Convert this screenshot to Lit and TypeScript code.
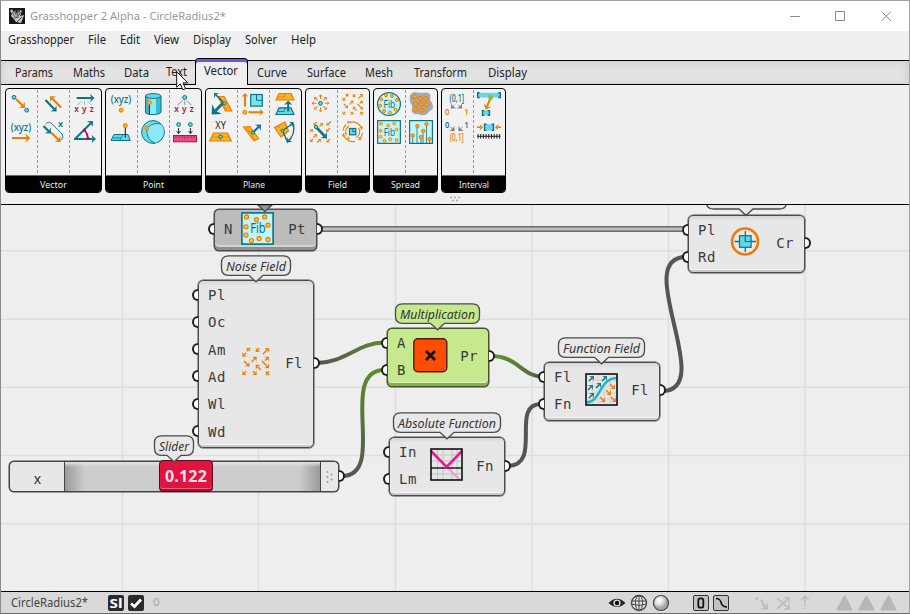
import { LitElement, html, svg, css } from "lit";
import { customElement } from "lit/decorators.js";

const T = "#0b7486", O = "#ea7d00", C = "#66d7e8", Y = "#ffb31f", M = "#b3124f";

/* Text run set to an exact width so it can sit in a flex row. */
const label = (s: string, w: number, size = 12, cls = "") =>
  html`<svg class="label ${cls}" width=${w} height="16"><text x="0" y="12" font-size=${size} textLength=${w} lengthAdjust="spacingAndGlyphs">${s}</text></svg>`;

const stext = (s: string, x: number, y: number, w: number, size: number, fill: string, weight = 400) =>
  svg`<text x=${x} y=${y} font-size=${size} fill=${fill} font-weight=${weight} textLength=${w} lengthAdjust="spacingAndGlyphs">${s}</text>`;

/* Arrow with a right-angled, notched head. */
const arrow = (x1: number, y1: number, x2: number, y2: number, c: string, w = 2, size = 5) => {
  const h = size * 0.76, d = Math.hypot(x2 - x1, y2 - y1), ux = (x2 - x1) / d, uy = (y2 - y1) / d;
  const bx = x2 - ux * h, by = y2 - uy * h, s = h * 0.92;
  const ix = x2 - ux * h * 0.7, iy = y2 - uy * h * 0.7;
  return svg`<path d="M${x1} ${y1}L${ix} ${iy}" stroke=${c} stroke-width=${w} fill="none"/>
    <path d="M${x2} ${y2}L${bx - uy * s} ${by + ux * s}L${ix} ${iy}L${bx + uy * s} ${by - ux * s}Z" fill=${c}/>`;
};
const arrows = (list: number[][], c: string, w = 1.4, h = 4) => list.map((a) => arrow(a[0], a[1], a[2], a[3], c, w, h));
const dot = (x: number, y: number, r = 2, fill = Y, stroke = O) =>
  svg`<circle cx=${x} cy=${y} r=${r} fill=${fill} stroke=${stroke} stroke-width="1"/>`;
const line = (d: string, c: string, w = 1, fill = "none") => svg`<path d=${d} stroke=${c} stroke-width=${w} fill=${fill}/>`;

const noise = () => arrows([
  [8, 4, 4.7, 0.7], [4, 6, 0.3, 9.7], [17.3, 1.3, 13.7, 5], [21, 7, 27, 1], [9.7, 14.7, 14.7, 9.7], [2, 14, 7.5, 19.5],
  [23, 13.5, 27, 9.7], [20, 14, 27, 21.3], [18.7, 22.7, 13.7, 17.7], [4, 24.3, 0.3, 28], [11, 24.3, 14.7, 28], [27.3, 28, 23.7, 24.4],
], O, 1.4, 4.6);

const fibDots = [[5, 4.5], [14, 7], [21.5, 4.5], [4.5, 13.5], [24.5, 12], [4.5, 21], [9.5, 26], [16.5, 24], [24.5, 25]];
const fibSquare = () => svg`<rect x="0.8" y="0.8" width="28.4" height="28.4" fill="#c2f5fb" stroke=${T} stroke-width="1.5"/>
  ${fibDots.map(([x, y]) => dot(x, y, 1.9, "#ffc93c"))}${stext("Fib", 8.3, 19.5, 14.2, 12.5, T)}`;

const xyz = () => svg`${line("M8 9.5L4.5 13M11.5 9.5V13M15 9.5L18.5 13", "#aaa", 1)}
  ${stext("x", 1.3, 20.3, 4.6, 9.5, M, 600)}${stext("y", 9, 20.3, 4.6, 9.5, M, 600)}${stext("z", 16.8, 20.3, 4, 9.5, M, 600)}`;

const brackets = (x: number, y: number, w: number, h: number) =>
  svg`<rect x=${x} y=${y} width=${w} height=${h} fill=${C}/>${line(`M${x + 2} ${y}H${x}V${y + h}H${x + 2}M${x + w - 2} ${y}H${x + w}V${y + h}H${x + w - 2}`, T, 1.4)}`;

const icons: Record<string, () => unknown> = {
  v1: () => svg`${arrow(7, 7, 16, 16, O, 2, 6)}${dot(5, 5.3, 1.9, C, T)}${dot(17.7, 18.2, 1.9, C, T)}`,
  v2: () => svg`${arrow(20, 15.5, 9, 4.2, O, 2.2, 6)}${arrow(4.5, 8, 15.6, 19.6, T, 2.2, 6)}`,
  v3: () => svg`${arrow(3.6, 6, 21.5, 6, T, 2.2, 6)}${xyz()}`,
  v4: () => svg`${stext("(xyz)", 1.7, 11, 20.6, 10, T, 500)}${arrow(3, 18, 21.3, 18, O, 2, 6.5)}`,
  v5: () => svg`${arrow(2.5, 6, 10, 13.5, T, 2.2, 6)}${arrow(10, 12.5, 19.7, 22, O, 2.2, 6)}
    ${line("M4.5 4.2Q7.5 0.5 11 3.8L21 14Q23 17 20.5 20.2", T, 0.9)}${stext("x", 17, 6.8, 5, 9, T, 600)}`,
  v6: () => svg`${line("M11.5 10Q14.5 13.5 15 18.4", M, 1.8)}${arrow(2, 19, 20, 1, T, 2, 6)}${arrow(1, 19, 23, 19, T, 2, 6)}${dot(11.5, 10, 1.2, M, M)}${dot(15, 18.5, 1.2, M, M)}`,
  p1: () => svg`${stext("(xyz)", 1.7, 11.3, 20.6, 10, T, 500)}${dot(12.2, 18.2, 2)}`,
  p2: () => svg`<path d="M4.5 4V20Q4.5 22.5 12 22.5T20 20V4Z" fill="#36bcd0" stroke=${T} stroke-width="1"/><path d="M7.5 5H15V22H7.5Z" fill="#8beaf5"/>
    <ellipse cx="12.2" cy="4" rx="7.7" ry="2.4" fill=${C} stroke=${T}/>${line("M8.3 12V22.5", "#111", 1)}${dot(8.3, 10.4, 2)}`,
  p3: () => svg`${line("M10 8.5L5 13M11.7 8.5V13M13 8.5L18 13", "#aaa")}${xyz()}${dot(11.7, 5.5, 2, C, T)}`,
  p4: () => svg`${line("M5 14.5H19L21.3 20.5H2Z", T, 1, C)}${line("M4 18H12L14 15M12 18L11 20", T, 0.8)}${line("M16.3 7V17.5", "#111", 1)}${dot(16.3, 5.6, 2)}`,
  p5: () => svg`<circle cx="12" cy="12" r="11.4" fill="#70ddea" stroke=${T}/><path d="M6 8Q12 2 20 4Q23.4 8 22.5 14Q20 21 14 23Q5 18 6 8Z" fill="#8beaf5"/>
    ${line("M6 8Q4.5 20 14 23M6 8Q12 2 20 4", T, 0.9)}${dot(6, 8, 2)}`,
  p6: () => svg`${dot(5.6, 4.5, 1.9, C, T)}${dot(17.4, 4.5, 1.9, C, T)}${arrows([[5.6, 8, 5.6, 14], [17.4, 8, 17.4, 14]], "#222", 1, 3.8)}
    <rect x="0.5" y="15.5" width="23" height="6.3" fill="#ea4b86" stroke=${M}/>${line("M3 15V18M6 15V18M9 15V18M12 15V19M15 15V18M18 15V18M21 15V18", M, 0.8)}`,
  l1: () => svg`${line("M9 4.5H15L22.7 19H16.5Z", O, 1.2, Y)}${line("M12 7L18 18M12 11H17", O, 0.8)}${arrow(14, 11, 2.7, 22.5, T, 3, 10)}${arrow(15, 11, 5, 1, T, 1.5, 5)}${dot(15.5, 11.5, 1.5, C, T)}`,
  l2: () => svg`${arrow(4, 14.5, 4, 1, O, 2, 5)}${arrow(7.5, 20.2, 22.6, 20.2, O, 2, 5)}${dot(3.8, 20.3, 2)}
    <rect x="9.7" y="2.5" width="11.6" height="11.6" fill="#7be1ed" stroke=${T} stroke-width="1.2"/>${line("M15.5 2.5V8.3H21.3", T)}`,
  l3: () => svg`${line("M6 1.5H18L21 8H3Z", O, 1.2, Y)}${line("M5 5H11L12 2", O, 0.8)}${line("M6 15.8H18L21 22.5H3Z", T, 1.2, C)}${line("M5 19.5H11L12 16", T, 0.8)}${arrow(15.2, 19.5, 15.2, 8.5, T, 2, 6)}`,
  l4: () => svg`${stext("XY", 6.3, 9, 10.5, 10, "#222")}${line("M4.5 13H18.5L22.3 21H0.7Z", O, 1.2, Y)}${line("M11.5 13V21M3 17H20", O, 0.8)}${dot(11.4, 16.8, 1.7, C, T)}`,
  l5: () => svg`${line("M2.5 7L9 6.5L17.5 18.5L13 20.8Z", O, 1.2, Y)}${line("M5 7L14 19.5M7 12L12 11", O, 0.8)}${arrow(12, 12.5, 20, 4.5, T, 2, 6)}${dot(12, 12.6, 1.5, C, T)}`,
  l6: () => svg`${line("M1.5 7.5L12 2L15.5 11L8 17Z", O, 1.2, Y)}${line("M5 5.5L9 11L14 8", O, 0.8)}${line("M9.5 10.5L20 3.5M9.5 10.5L14.5 22Q22.5 15 20.5 4", T, 1.4)}${arrow(17, 5, 20.8, 2.2, T, 1.4, 5)}${arrow(17.5, 18.5, 14.2, 22.4, T, 1.4, 5)}${dot(9.5, 10.8, 1.4, C, T)}`,
  f1: () => svg`${[0, 45, 90, 135, 180, 225, 270, 315].map((a) => {
    const r = (a * Math.PI) / 180, x = Math.cos(r), y = Math.sin(r);
    return arrow(11.5 + 4.2 * x, 11.3 + 4.2 * y, 11.5 + 9 * x, 11.3 + 9 * y, O, 1.1, 3.2);
  })}${dot(11.5, 11.3, 1.9, C, T)}`,
  f2: () => svg`<g transform="translate(1.3 1.3) scale(.76)">${noise()}</g>`,
  f3: () => svg`${arrows([[8, 2, 4.5, 5.5], [14, 3, 10.5, 6.5], [22, 1.5, 17.5, 5.5], [4, 9, 1, 12], [21, 8, 17, 12], [8, 14, 4.5, 17.5], [4, 19, 1, 22], [12, 19, 8, 22.5], [21, 19, 17.5, 22.5]].map(([a, b, c, d]) => [c, d, a, b]).map(([a, b, c, d], i) => (i % 2 ? [a, b, c, d] : [c, d, a, b])), O, 1.1, 3.6)}${arrow(7, 7, 18, 18.5, T, 2.6, 6.5)}${dot(7, 7, 1.7, C, T)}`,
  f4: () => svg`${line("M5.5 15A6.5 6.5 0 0 1 8 6M17.5 8A6.5 6.5 0 0 1 15 17.5M8 2.5A10 10 0 0 1 20 7M3 16A10 10 0 0 0 14 21.5M2 11A10 10 0 0 1 5 4.5M21.5 13A10 10 0 0 1 18 19.5", O, 1.1)}
    ${arrows([[6, 3, 9, 1.5], [17, 20, 20, 17.5], [3, 13, 2, 17], [20, 10, 21, 6], [6, 18, 9, 18.5]], O, 1, 3.2)}
    <rect x="8.5" y="8.5" width="6.3" height="6.3" fill=${C} stroke=${T} stroke-width="1.2"/>${line("M11.7 8.5V11.5H14.8", T, 0.9)}`,
  s1: () => svg`<circle cx="12" cy="12" r="11.4" fill="#c2f5fb" stroke=${T} stroke-width="1.2"/>
    ${[[9, 3.2], [15, 4], [20, 8], [4.2, 7.3], [3.2, 13.8], [7, 19], [13, 20.7], [18.5, 17.6]].map(([x, y]) => dot(x, y, 1.5, "#ffc93c"))}${stext("Fib", 6.5, 15.6, 11.8, 10, T)}`,
  s2: () => svg`<path d="M1 3Q4 -1 8 .5Q14 1 16 .5Q21 0 21.5 4L21 8Q25 12 23.5 17Q20 19 18 22Q13 24.5 9 22Q3 23 2.5 18Q4 14 1.5 11Q0 7 1 3Z" fill="#a8a8a8"/>
    ${[[5.5, 4.8], [11, 6.5], [16.8, 6.8], [6.5, 12], [12, 12.2], [17.6, 12.5], [7, 17.3], [13, 18.2]].map(([x, y]) => dot(x, y, 2, "#ffa421"))}`,
  s3: () => svg`<g transform="scale(.8)">${fibSquare()}</g>`,
  s4: () => svg`<rect x="0.6" y="0.6" width="22.8" height="22.8" fill="#c2f5fb" stroke=${T} stroke-width="1.2"/>
    ${line("M3.6 16V23M8 7V23M12 19V23M14 11V23M17.5 5V23M20.5 19V23", T, 0.8)}${[[3.8, 15.5], [8.4, 6], [12, 17], [14.3, 11], [17.5, 4], [20.5, 19]].map(([x, y]) => dot(x, y, 1.7, "#ffa421"))}`,
  i1: () => svg`${stext("(0,1]", 4.5, 9.5, 14.5, 10.5, T, 500)}${arrows([[9.5, 13, 6, 16.5], [13.5, 13, 17, 16.5]], "#777", 1, 5)}${stext("0", 0, 22.6, 4.4, 9.5, O, 600)}${stext("1", 19.6, 22.6, 4, 9.5, O, 600)}`,
  i2: () => svg`${brackets(0.7, 0.8, 22.6, 4.7)}${arrow(14.5, 4, 8.7, 17.4, O, 2, 6)}<circle cx="13.5" cy="5.5" r="2.8" fill="#8dbf45" opacity=".7"/>${brackets(5.5, 18.6, 7, 4.6)}`,
  i3: () => svg`${stext("0", 0, 7.6, 4.4, 9.5, T, 600)}${stext("1", 19.6, 7.6, 4, 9.5, T, 600)}${arrows([[5.5, 7, 9.5, 11], [17.5, 7, 13.5, 11]], "#777", 1, 5)}${stext("(0,1]", 4.7, 21.4, 14.2, 10.5, O, 500)}`,
  i4: () => svg`${arrow(0, 7.3, 6, 7.3, O, 1.4, 4.6)}${arrow(24, 7.3, 18, 7.3, O, 1.4, 4.6)}${brackets(7.5, 4.2, 9, 6.2)}
    ${line("M0.5 16.3H23.5M1 14V18.6M3.7 14V18.6M6.4 14V18.6M9.1 14V18.6M11.8 14V18.6M14.5 14V18.6M17.2 14V18.6M19.9 14V18.6M22.6 14V18.6", "#222", 1)}`,
};

const groups: { name: string; w: number; cols: string[][] }[] = [
  { name: "Vector", w: 27, cols: [["v1", "v4"], ["v2", "v5"], ["v3", "v6"]] },
  { name: "Point", w: 21, cols: [["p1", "p4"], ["p2", "p5"], ["p3", "p6"]] },
  { name: "Plane", w: 22, cols: [["l1", "l4"], ["l2", "l5"], ["l3", "l6"]] },
  { name: "Field", w: 19, cols: [["f1", "f3"], ["f2", "f4"]] },
  { name: "Spread", w: 29, cols: [["s1", "s3"], ["s2", "s4"]] },
  { name: "Interval", w: 30, cols: [["i1", "i3"], ["i2", "i4"]] },
];

const menu: [string, number][] = [["Grasshopper", 66], ["File", 18], ["Edit", 20], ["View", 25], ["Display", 38], ["Solver", 32], ["Help", 25]];
const tabs: [string, number, number][] = [
  ["Params", 38, 20], ["Maths", 32, 19], ["Data", 25, 17], ["Text", 21, 8], ["Vector", 34, 9], ["Curve", 30, 19.5], ["Surface", 39, 19.5], ["Mesh", 28, 21], ["Transform", 53, 21], ["Display", 39, 0],
];

interface NodeSpec { x: number; y: number; w: number; h: number; ins: string[]; top: number; out: string; outY: number; tone?: string; ix: number; iy: number; iw: number; art: () => unknown }
const nodes: NodeSpec[] = [
  { x: 214, y: 209, w: 103, h: 42, ins: ["N"], top: 6, out: "Pt", outY: 20, tone: "grey", ix: 27, iy: 3, iw: 33, art: () => svg`<g transform="scale(1.1)">${fibSquare()}</g>` },
  { x: 198, y: 280, w: 116, h: 168, ins: ["Pl", "Oc", "Am", "Ad", "Wl", "Wd"], top: 1, out: "Fl", outY: 83, ix: 44, iy: 67, iw: 29, art: noise },
  { x: 387, y: 328, w: 102, h: 59, ins: ["A", "B"], top: 1, out: "Pr", outY: 28, tone: "green", ix: 26, iy: 10, iw: 35,
    art: () => svg`<rect x="0.8" y="0.8" width="33" height="33" rx="4" fill="#ff4d00" stroke="#4a2000" stroke-width="1.4"/>${line("M13 13L22 22M22 13L13 22", "#111", 2.8)}` },
  { x: 389, y: 437, w: 116, h: 59, ins: ["In", "Lm"], top: 1, out: "Fn", outY: 29, ix: 41, iy: 11, iw: 34,
    art: () => svg`<rect x="1" y="1" width="31" height="31" fill="#e6e6e6"/>${line("M7.5 1V32M13 1V32M22 1V32M27 1V32M1 7H32M1 13H32M1 26H32", "#bbb", 0.8)}${line("M17 19L29 31", "#f5a0c5", 2.4)}${line("M1 20H32", "#111", 1.4)}${line("M1 3L16.6 19L32 3", "#ee1c86", 2.6)}<rect x="1" y="1" width="31" height="31" fill="none" stroke="#111" stroke-width="1.6"/>` },
  { x: 544, y: 362, w: 116, h: 59, ins: ["Fl", "Fn"], top: 1, out: "Fl", outY: 28, ix: 41, iy: 11, iw: 34,
    art: () => svg`<rect x="1" y="1" width="31" height="31" fill="#e6e6e6"/>${line("M7.5 1V32M13 1V32M19 1V32M25 1V32M1 7H32M1 13H32M1 20H32M1 26H32", "#ccc", 0.8)}
      ${arrows([[4, 8, 9, 3], [17, 8, 22, 3], [3, 17, 8, 12], [11, 15, 16, 10], [4, 25, 9, 20]], T, 1.4, 4.8)}${arrows([[25, 11, 30, 16], [21, 17, 26, 22], [15, 24, 20, 29], [26, 24, 31, 29]], O, 1.4, 4.8)}
      ${line("M1 29.5C16 30 14 5 32 5", "#23b4cc", 2.5)}<rect x="1" y="1" width="31" height="31" fill="none" stroke="#111" stroke-width="1.6"/>` },
  { x: 688, y: 215, w: 117, h: 58, ins: ["Pl", "Rd"], top: 0.5, out: "Cr", outY: 28, ix: 42, iy: 12, iw: 30,
    art: () => svg`<circle cx="15" cy="14.5" r="13" fill="#e9e9e9" stroke=${O} stroke-width="2.6"/>${line("M4.5 14.5H26M15.3 4V25", T, 1.3)}<rect x="9.5" y="8.7" width="11.6" height="11.6" fill="#5ed7e8" stroke=${T} stroke-width="1.2"/>${line("M15.3 9V14.5H21", T, 1.2)}` },
];

/* Callouts: left, right, top, tip x, caption. */
const callouts: [number, number, number, number, string, string][] = [
  [221.5, 290.5, 255.8, 256, "Noise Field", "#e8e8e8"],
  [395.5, 479.5, 303.8, 437.5, "Multiplication", "#c5e98c"],
  [393.5, 500.5, 412.8, 447, "Absolute Function", "#e8e8e8"],
  [558.5, 644.5, 337.8, 601.5, "Function Field", "#e8e8e8"],
  [154.5, 193.5, 435.8, 174, "Slider", "#e8e8e8"],
  [706.5, 786.5, 189.5, 746, "", "#e8e8e8"],
];

@customElement("app-root")
export class AppRoot extends LitElement {
  static styles = css`
    :host { display: flex; flex-direction: column; position: relative; box-sizing: border-box; width: 910px; height: 614px; overflow: hidden;
      border: 1px solid #a3a3a3; border-bottom-color: #6f6b73; border-left-color: #8b8b8f; background: #efefef; font-family: "Noto Sans", "Open Sans", sans-serif; color: #1b1b1b; }
    svg { display: block; flex: none; overflow: visible; }
    svg text { font-family: "Noto Sans", "Open Sans", sans-serif; }
    .label text { fill: #222; }
    .title { height: 30px; background: #fff; display: flex; align-items: center; padding-left: 8px; gap: 5px; box-sizing: border-box; }
    .label.dim text { fill: #999; }
    .winbtns { margin-left: auto; margin-right: 17px; }
    .menu { height: 29px; flex: none; display: flex; gap: 14px; padding: 1px 7px 0; box-sizing: border-box; }
    .tabs { height: 25px; flex: none; box-sizing: border-box; border-top: 1px solid #000; border-bottom: 1px solid #000; background: #e3e3e3;
      box-shadow: inset 0 7px 7px -5px #cfcfcf, inset -7px 0 7px -4px #d2d2d2, inset 0 -5px 5px -4px #d4d4d4, inset 7px 0 7px -5px #d2d2d2; display: flex; padding-left: 14px; }
    .tab { padding-top: 4px; margin-right: var(--g); }
    .tab.raised { padding-top: 3px; }
    .tab.active { box-sizing: border-box; height: 27px; margin-top: -3px; padding: 4px 9px 0 8px; border: 1px solid #000; border-bottom: none; border-radius: 4px 4px 0 0; background: #efefef; box-shadow: inset 0 3px #7157e0; }
    .ribbon { height: 120px; flex: none; box-sizing: border-box; padding: 3px 0 0 4px; display: flex; align-items: flex-start; gap: 3px; border-bottom: 1px solid #000; position: relative; }
    .group { height: 105px; box-sizing: border-box; border: 1px solid #000; border-radius: 4px; display: flex; flex-direction: column; overflow: hidden; background: #f1f1f1; }
    .cols { flex: 1; display: flex; }
    .col { width: 32px; box-sizing: border-box; display: flex; flex-direction: column; gap: 4px; padding: 3px 0 0 3px;
      background: linear-gradient(#999 60%, transparent 60%) 31px 1px / 1px 5px repeat-y; }
    .col:last-child { background: none; width: 31px; }
    .caption { height: 16px; background: #000; display: flex; justify-content: center; border-top: 1px solid #666; }
    .caption text { fill: #e8e8e8; }
    .grip { position: absolute; left: 448px; top: 111px; }
    .canvas { height: 386px; flex: none; position: relative; overflow: hidden; background: #eee; }
    .layer { position: absolute; left: 0; top: 0; }
    .node { position: absolute; box-sizing: border-box; border: 1.5px solid #4c4c4c; border-radius: 5px; background: linear-gradient(#d6d6d6, #e7e7e7 5px, #e7e7e7); box-shadow: inset 0 -2px #c9c9c9, inset 0 -3px #f5f5f5, 0 0 0 .5px #4c4c4c; }
    .node.grey { background: #bcbcbc; box-shadow: inset 0 -3px #8f8f8f, inset 0 -5px #d3d3d3, 0 0 0 .5px #4c4c4c; }
    .node.green { background: #c5e98c; border-color: #45542b; box-shadow: inset 0 -3px #8bab58, inset 0 -4px #def6b5, 0 0 0 .5px #45542b; }
    .art { position: absolute; }
    .ports { display: flex; flex-direction: column; }
    .port { height: 27.3px; box-sizing: border-box; display: flex; align-items: center; position: relative; padding: 2px 0 0 9px; font: 14px/25px "DejaVu Sans Mono", monospace; letter-spacing: .5px; color: #3a3a3a; }
    .port i, .out i { position: absolute; box-sizing: border-box; width: 6px; height: 12px; border: 2.2px solid #1e1e1e; background: #fff; top: 7.5px; }
    .port i { left: -7px; border-right: none; border-radius: 6px 0 0 6px; }
    .out { position: absolute; right: 10px; height: 27px; font: 14px/29px "DejaVu Sans Mono", monospace; letter-spacing: .5px; color: #3a3a3a; }
    .out i { right: -17px; border-left: none; border-radius: 0 6px 6px 0; }
    .slider { position: absolute; left: 8px; top: 256px; width: 330px; height: 31px; display: flex; box-sizing: border-box; border: 1.5px solid #444; border-radius: 5px; background: #e7e7e7; box-shadow: 0 0 0 .5px #444; }
    .slider .name { width: 55px; display: flex; align-items: center; justify-content: center; border-right: 1.5px solid #444; font-size: 14px; padding: 3px 0 0 1px; box-sizing: border-box; color: #333; }
    .track { flex: 1; position: relative; background: linear-gradient(#e4e4e4, transparent 5px), linear-gradient(90deg, #9a9a9a, #cdcdcd 20px, #cdcdcd 234px, #9a9a9a); border-right: 1.5px solid #444; }
    .handle { width: 17px; display: flex; align-items: center; justify-content: center; }
    .knob { position: absolute; left: 94px; top: -2px; width: 54px; height: 32px; box-sizing: border-box; border: 1.5px solid #5a0a20; border-radius: 4px; background: #df1540; color: #fbdfe5; font: 700 16px/30px "Noto Sans", sans-serif; text-align: center; letter-spacing: .2px; box-shadow: inset 0 -2px #a3102f, inset 0 -3px #f06078; }
    .slider > i { position: absolute; right: -7px; top: 8px; width: 6px; height: 12px; box-sizing: border-box; border: 2.2px solid #1e1e1e; border-left: none; border-radius: 0 6px 6px 0; background: #fff; }
    .status { flex: 1; background: #d9d9d9; border-top: 1px solid #000; display: flex; align-items: center; padding-left: 10px; }
    .status .label text { fill: #444; }
    .badge { width: 16px; height: 16px; border-radius: 2px; background: #2a2a2a; margin-left: 4px; }
    .badge.first { margin-left: 20px; }
    .zero { margin-left: 9px; font-size: 11.5px; color: #a5a5a5; line-height: 16px; margin-top: -2px; }
    .tools { margin-left: auto; margin-right: 8px; }
    .cursor { position: absolute; left: 175px; top: 70px; }
  `;

  render() {
    return html`
      <div class="title">
        <svg width="16" height="16"><rect width="16" height="16" fill="#161616"/><path d="M1 3L3 6L2 8L4 10L7 14L12 15L14 10L15 7L11 8L13 3L11 2L10 6L9 1L8 6L6 2L5 5L3 1Z" fill="#c4c4c4"/><path d="M3 4L6 9M6 3L7 7M9 3L8 9M12 4L9 8M5 10L10 9M8 14L13 9" stroke="#333" stroke-width=".8"/></svg>
        ${label("Grasshopper 2 Alpha - CircleRadius2*", 196, 11.5, "dim")}
        <svg class="winbtns" width="102" height="12" fill="none" stroke="#8d8d8d"><path d="M0 6.5H10M45.5 1.5h9v9h-9zM91.5 1.5l9.5 9.5M101 1.5L91.5 11"/></svg>
      </div>
      <div class="menu">${menu.map(([s, w]) => label(s, w, 11.7))}</div>
      <div class="tabs">${tabs.map(([s, w, g]) => html`<div class="tab ${s === "Text" ? "raised" : s === "Vector" ? "active" : ""}" style="--g:${g}px">${label(s, w, 11.7)}</div>`)}</div>
      <div class="ribbon">
        ${groups.map((g) => html`<div class="group"><div class="cols">${g.cols.map((c) => html`<div class="col">${c.map((k) => html`<svg width="24" height="24">${icons[k]()}</svg>`)}</div>`)}</div>
          <div class="caption">${label(g.name, g.w, 9.3)}</div></div>`)}
        <svg class="grip" width="12" height="8" fill="#aaa"><circle cx="2" cy="1.5" r="1"/><circle cx="6" cy="1.5" r="1"/><circle cx="10" cy="1.5" r="1"/><circle cx="4" cy="4.5" r="1"/><circle cx="8" cy="4.5" r="1"/></svg>
      </div>
      <div class="canvas">${this.canvas()}</div>
      <div class="status">
        ${label("CircleRadius2*", 77, 11.7)}
        <div class="badge first"><svg width="16" height="16"><text x="1.5" y="13" font-size="13" font-weight="700" fill="#fff" textLength="13" lengthAdjust="spacingAndGlyphs">Sl</text></svg></div>
        <div class="badge"><svg width="16" height="16"><path d="M3 8.5L6.5 11.5L13 4.5" stroke="#fff" stroke-width="2.8" fill="none"/></svg></div>
        <span class="zero">0</span>
        ${this.tools()}
      </div>
      <svg class="cursor" width="14" height="22"><path d="M.7 .7V16.2L4.3 12.9L6.9 18.8L9.6 17.6L7 11.9H11.8Z" fill="#fff" stroke="#111" stroke-width="1"/></svg>`;
  }

  private tools() {
    return html`<svg class="tools" width="293" height="18" viewBox="608 593 293 18">
      <path d="M608.5 602Q617 593.5 625.5 602Q617 610 608.5 602Z" fill="#222"/><circle cx="617" cy="602" r="3.6" fill="#ddd"/><circle cx="617" cy="602" r="2.2" fill="#111"/>
      <g fill="none" stroke="#444"><circle cx="639" cy="602" r="7.5" fill="#e4e4e4" stroke-width="1.3"/><ellipse cx="639" cy="602" rx="3.6" ry="7.5"/><path d="M631.5 603Q639 606 646.5 603M639 594.5V609.5M632 600H646"/></g>
      <defs><radialGradient id="ball" cx=".38" cy=".32"><stop offset="0" stop-color="#fff"/><stop offset=".55" stop-color="#e0e0e0"/><stop offset="1" stop-color="#a5a5a5"/></radialGradient></defs>
      <circle cx="661" cy="602" r="7.5" fill="url(#ball)" stroke="#444" stroke-width="1.2"/>
      <g fill="#c3c3c3" stroke="#333"><rect x="693.5" y="594.5" width="15" height="15" rx="1.5"/><rect x="713.5" y="594.5" width="15" height="15" rx="1.5"/></g>
      <rect x="698.3" y="597.3" width="5" height="9.4" rx="2" fill="none" stroke="#111" stroke-width="1.8"/>
      <path d="M716 597.5C724 597.5 718 606 727 606" fill="none" stroke="#111" stroke-width="1.7"/>
      ${arrow(762, 602.5, 768, 608.5, "#bbb", 1.8, 7)}<path d="M755 597.5H758M760 599Q764 600 762.5 603.5" stroke="#bbb" stroke-width="1.8" fill="none"/>
      ${arrows([[777, 608, 790, 596], [777, 597, 790, 608.5], [805, 608, 805, 594]], "#bbb", 1.6, 6.5)}
      <path d="M804 602.5H806M804 606H806" stroke="#d9d9d9" stroke-width="1.3"/>
      <g fill="#b7b7b7" stroke="#b7b7b7" stroke-width="2" stroke-linejoin="round"><path d="M844.5 595.5L851.5 608.5H837.5ZM866.5 595.5L873.5 608.5H859.5ZM888.5 595.5L895.5 608.5H881.5Z"/></g>
    </svg>`;
  }

  private canvas() {
    const vb = "1 205 908 386";
    return html`
      <svg class="layer" width="908" height="386" viewBox=${vb}>
        <defs>
          <linearGradient id="g1" gradientUnits="userSpaceOnUse" x1="320" y1="0" x2="384" y2="0"><stop offset="0" stop-color="#555"/><stop offset="1" stop-color="#5c8a2d"/></linearGradient>
          <linearGradient id="g2" gradientUnits="userSpaceOnUse" x1="0" y1="478" x2="0" y2="375"><stop offset="0" stop-color="#555"/><stop offset="1" stop-color="#5c8a2d"/></linearGradient>
          <linearGradient id="g3" gradientUnits="userSpaceOnUse" x1="492" y1="0" x2="542" y2="0"><stop offset="0" stop-color="#5f9a28"/><stop offset="1" stop-color="#566045"/></linearGradient>
        </defs>
        <path d="M122.5 205V591M258.5 205V591M395.5 205V591M532 205V591M668.5 205V591M805 205V591M1 250.7H909M1 319.2H909M1 387.3H909M1 455.5H909M1 523.8H909" stroke="#dedede" stroke-width="1.4"/>
        <path d="M318 229H686" stroke="#6b6b6b" stroke-width="6"/><path d="M318 229H686" stroke="#bdbdbd" stroke-width="3"/>
        <g fill="none" stroke-width="4">
          <path d="M317 363C345 363 358 342.5 384 342.5" stroke="url(#g1)"/>
          <path d="M342 476C388 476 337 371 384 370" stroke="url(#g2)"/>
          <path d="M491 356C518 356 522 377 544 377" stroke="url(#g3)"/>
          <path d="M507 466C544 466 509 404 541 404" stroke="#555"/>
          <path d="M662 391C718 391 630 257 686 257" stroke="#555"/>
        </g>
      </svg>
      ${nodes.map((n) => html`<div class="node ${n.tone ?? ""}" style="left:${n.x - 1}px;top:${n.y - 205}px;width:${n.w}px;height:${n.h}px">
        <div class="ports" style="padding-top:${Math.max(0, n.top - 1)}px">${n.ins.map((p) => html`<div class="port"><i></i>${p}</div>`)}</div>
        <svg class="art" style="left:${n.ix - 1}px;top:${n.iy - 1}px" width=${n.iw} height=${n.iw}>${n.art()}</svg>
        <div class="out" style="top:${n.outY - 15}px"><i></i>${n.out}</div>
      </div>`)}
      <div class="slider"><div class="name">x</div><div class="track"><div class="knob">0.122</div></div>
        <div class="handle"><svg width="10" height="14" fill="#999"><circle cx="2.5" cy="2" r="1"/><circle cx="2.5" cy="7" r="1"/><circle cx="2.5" cy="12" r="1"/><circle cx="6.5" cy="4.5" r="1"/><circle cx="6.5" cy="9.5" r="1"/></svg></div><i></i></div>
      <svg class="layer" width="908" height="386" viewBox=${vb}>
        <path d="M258 205L265 211.5L272 205Z" fill="#999" stroke="#444" stroke-width="1.2"/>
        ${callouts.map(([l, r, t, tx, s, fill]) => svg`<path d="M${l + 7} ${t}H${r - 7}Q${r} ${t} ${r} ${t + 7}V${t + 12.5}Q${r} ${t + 19.5} ${r - 7} ${t + 19.5}H${tx + 7}L${tx} ${t + 26}L${tx - 7} ${t + 19.5}H${l + 7}Q${l} ${t + 19.5} ${l} ${t + 12.5}V${t + 7}Q${l} ${t} ${l + 7} ${t}Z" fill=${fill} stroke="#4a4a4a" stroke-width="1.3"/>
          ${s ? svg`<text x=${l + 4.5} y=${t + 15} font-size="13" font-style="italic" fill="#333" textLength=${r - l - 9} lengthAdjust="spacingAndGlyphs">${s}</text>` : ""}`)}
      </svg>`;
  }
}
